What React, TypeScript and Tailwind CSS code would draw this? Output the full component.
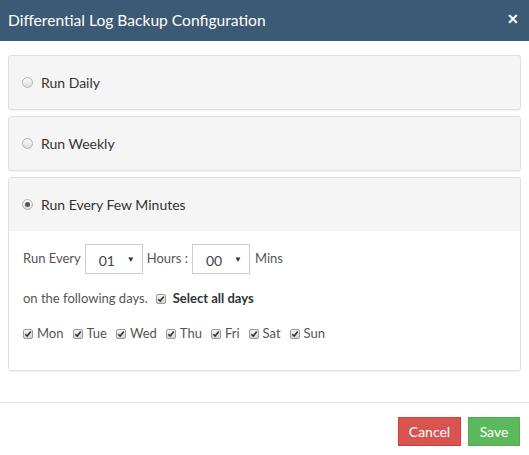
import React, { useState } from 'react';

const DAYS = ['Mon', 'Tue', 'Wed', 'Thu', 'Fri', 'Sat', 'Sun'];

const Radio: React.FC<{ checked?: boolean }> = ({ checked }) => (
  <span className="flex h-[11px] w-[11px] items-center justify-center rounded-full border border-[#b5b5b5] bg-gradient-to-b from-[#fbfbfb] to-[#dcdcdc]">
    {checked && <span className="h-[5px] w-[5px] rounded-full bg-[#555]" />}
  </span>
);

const Check: React.FC = () => (
  <span className="flex h-[10px] w-[10px] items-center justify-center rounded-[2px] border border-[#9a9a9a] bg-gradient-to-b from-[#f4f4f4] to-[#d4d4d4]">
    <svg width="8" height="8" viewBox="0 0 8 8">
      <path d="M1.3 4.2 L3.2 6.1 L6.8 1.6" fill="none" stroke="#333" strokeWidth="1.6" />
    </svg>
  </span>
);

const Select: React.FC<{ value: string }> = ({ value }) => (
  <div className="flex h-[30px] w-[58px] items-center justify-between border border-[#ccc] bg-white pl-[13px] pr-[7px] text-[14px] text-[#444]">
    <span className="pt-[2px]">{value}</span>
    <span className="text-[8px] text-[#333]">▼</span>
  </div>
);

const App: React.FC = () => {
  const [mode] = useState<'daily' | 'weekly' | 'minutes'>('minutes');

  return (
    <div className="h-[455px] w-[529px] bg-white font-['Lato','Liberation_Sans',sans-serif] text-[13px] text-[#333]">
      <header className="flex h-[41px] items-center justify-between bg-[#3c5a74] pl-[8px] pr-[10px]">
        <h1 className="text-[15.6px] text-white">Differential Log Backup Configuration</h1>
        <span className="mb-[4px] text-[14px] font-bold leading-none text-white">✕</span>
      </header>

      <main className="px-[8px] pb-[31px] pt-[14px]">
        <div className="flex h-[55px] items-center gap-[8px] rounded-[3px] border border-[#e0e0e0] bg-[#f5f5f5] pl-[13px] shadow-[0_1px_1px_rgba(0,0,0,0.05)]">
          <Radio checked={mode === 'daily'} />
          <span className="text-[14px]">Run Daily</span>
        </div>

        <div className="mt-[6px] flex h-[55px] items-center gap-[8px] rounded-[3px] border border-[#e0e0e0] bg-[#f5f5f5] pl-[13px] shadow-[0_1px_1px_rgba(0,0,0,0.05)]">
          <Radio checked={mode === 'weekly'} />
          <span className="text-[14px]">Run Weekly</span>
        </div>

        <div className="mt-[6px] overflow-hidden rounded-[3px] border border-[#e0e0e0] shadow-[0_1px_1px_rgba(0,0,0,0.05)]">
          <div className="flex h-[53px] items-center gap-[8px] bg-[#f5f5f5] pl-[13px]">
            <Radio checked={mode === 'minutes'} />
            <span className="text-[14px]">Run Every Few Minutes</span>
          </div>
          <div className="bg-white pb-[26px] pl-[14px] pt-[13px] text-[#555]">
            <div className="flex h-[30px] items-center">
              <span>Run Every</span>
              <span className="ml-[4px]"><Select value="01" /></span>
              <span className="ml-[4px]">Hours :</span>
              <span className="ml-[4px]"><Select value="00" /></span>
              <span className="ml-[5px]">Mins</span>
            </div>
            <div className="mt-[15px] flex h-[20px] items-center">
              <span>on the following days.</span>
              <span className="ml-[8px]"><Check /></span>
              <span className="ml-[7px] font-bold text-[#333]">Select all days</span>
            </div>
            <div className="mt-[15px] flex h-[20px] items-center gap-[9px]">
              {DAYS.map((d) => (
                <label key={d} className="flex items-center gap-[4px]">
                  <Check />
                  <span>{d}</span>
                </label>
              ))}
            </div>
          </div>
        </div>
      </main>

      <footer className="flex justify-end gap-[7px] border-t border-[#e5e5e5] pr-[9px] pt-[14px]">
        <button className="h-[29px] w-[63px] border border-[#d43f3a] bg-[#d9534f] text-[14px] text-white">Cancel</button>
        <button className="h-[29px] w-[52px] border border-[#4cae4c] bg-[#5cb85c] text-[14px] text-white">Save</button>
      </footer>
    </div>
  );
};

export default App;
